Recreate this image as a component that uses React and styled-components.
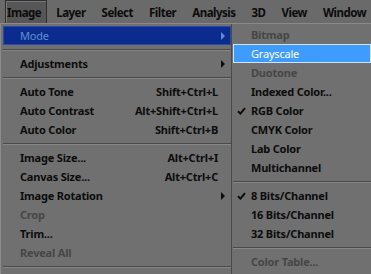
import React from "react";
import styled, { createGlobalStyle } from "styled-components";

const GlobalStyle = createGlobalStyle`
  html, body {
    margin: 0;
    padding: 0;
    background: #707070;
    overflow: hidden;
  }
  body {
    font-family: "Noto Sans", "Open Sans", sans-serif;
    font-weight: 700;
    font-size: 11px;
    letter-spacing: -0.2px;
    color: #0c0c0c;
  }
`;

const Wrapper = styled.div`
  width: 371px;
  height: 274px;
  display: flex;
  flex-direction: column;
  background: #707070;
  overflow: hidden;
`;

const MenuBar = styled.div`
  height: 23px;
  display: flex;
  align-items: stretch;
  padding-left: 5px;
  background: #6a6a6a;
  border-bottom: 1px solid #8a8a8a;
  box-sizing: content-box;
  white-space: nowrap;
`;

const BarItem = styled.div`
  display: flex;
  align-items: center;
  padding: ${(p) => (p.$active ? "0 5px 0 1px" : "0 7px")};
  margin-right: ${(p) => (p.$active ? "1px" : "0")};
  font-size: 11.5px;
  letter-spacing: -0.5px;
  background: ${(p) => (p.$active ? "#565656" : "transparent")};
  border: 1px solid ${(p) => (p.$active ? "#2e2e2e" : "transparent")};
  border-bottom: none;
  box-shadow: ${(p) => (p.$active ? "inset 1px 1px 0 #777777" : "none")};
`;

const Menus = styled.div`
  flex: 1;
  display: flex;
`;

const MainMenu = styled.div`
  width: 228px;
  padding: 2px 0 0 2px;
  border-left: 1px solid #8c8c8c;
  display: flex;
  flex-direction: column;
`;

const SubMenu = styled.div`
  flex: 1;
  padding: 1px 0 0 1px;
  border-left: 1px solid #4a4a4a;
  display: flex;
  flex-direction: column;
`;

const Row = styled.div`
  height: 19px;
  box-sizing: border-box;
  display: flex;
  align-items: center;
  padding-left: ${(p) => p.$indent}px;
  padding-right: 4px;
  color: ${(p) =>
    p.$variant === "dark"
      ? "#5f8fd0"
      : p.$variant === "light"
      ? "#ffffff"
      : p.$disabled
      ? "#464646"
      : "#0c0c0c"};
  background: ${(p) =>
    p.$variant === "dark"
      ? "#0b2c8e"
      : p.$variant === "light"
      ? "#3f9cff"
      : "transparent"};
  border: 1px solid
    ${(p) =>
      p.$variant === "dark"
        ? "#2a4aa8"
        : p.$variant === "light"
        ? "#cfe2ff"
        : "transparent"};
  position: relative;
  white-space: nowrap;
`;

const Check = styled.svg`
  position: absolute;
  left: 3px;
  top: 5px;
`;

const Label = styled.span`
  flex: 1;
  font-weight: ${(p) => (p.$light ? 400 : 700)};
`;

const Shortcut = styled.span`
  margin-right: 8px;
`;

const Arrow = styled.span`
  width: 0;
  height: 0;
  border-top: 4px solid transparent;
  border-bottom: 4px solid transparent;
  border-left: 4px solid ${(p) => (p.$dim ? "#5f8fd0" : "#0c0c0c")};
  margin-right: 1px;
`;

const Separator = styled.div`
  height: 9px;
  display: flex;
  flex-direction: column;
  justify-content: center;
  &::before {
    content: "";
    display: block;
    height: 1px;
    background: #4a4a4a;
  }
  &::after {
    content: "";
    display: block;
    height: 1px;
    background: #878787;
  }
`;

const barItems = ["Image", "Layer", "Select", "Filter", "Analysis", "3D", "View", "Window"];

const mainItems = [
  { label: "Mode", arrow: true, variant: "dark" },
  "sep",
  { label: "Adjustments", arrow: true },
  "sep",
  { label: "Auto Tone", shortcut: "Shift+Ctrl+L" },
  { label: "Auto Contrast", shortcut: "Alt+Shift+Ctrl+L" },
  { label: "Auto Color", shortcut: "Shift+Ctrl+B" },
  "sep",
  { label: "Image Size...", shortcut: "Alt+Ctrl+I" },
  { label: "Canvas Size...", shortcut: "Alt+Ctrl+C" },
  { label: "Image Rotation", arrow: true },
  { label: "Crop", disabled: true },
  { label: "Trim..." },
  { label: "Reveal All", disabled: true },
  "sep",
];

const subItems = [
  { label: "Bitmap", disabled: true },
  { label: "Grayscale", variant: "light" },
  { label: "Duotone", disabled: true },
  { label: "Indexed Color..." },
  { label: "RGB Color", checked: true },
  { label: "CMYK Color" },
  { label: "Lab Color" },
  { label: "Multichannel" },
  "sep",
  { label: "8 Bits/Channel", checked: true },
  { label: "16 Bits/Channel" },
  { label: "32 Bits/Channel" },
  "sep",
  { label: "Color Table...", disabled: true },
];

const renderItems = (items, indent) =>
  items.map((item, i) =>
    item === "sep" ? (
      <Separator key={i} />
    ) : (
      <Row key={i} $indent={indent} $variant={item.variant} $disabled={item.disabled}>
        {item.checked && (
          <Check width="9" height="8" viewBox="0 0 9 8">
            <path d="M1 4.2 L3.4 6.6 L8 1.2" fill="none" stroke="#0c0c0c" strokeWidth="2" />
          </Check>
        )}
        <Label $light={item.variant === "light" || item.variant === "dark"}>{item.label}</Label>
        {item.shortcut && <Shortcut>{item.shortcut}</Shortcut>}
        {item.arrow && <Arrow $dim={item.variant === "dark"} />}
      </Row>
    )
  );

const App = () => {
  return (
    <Wrapper>
      <GlobalStyle />
      <MenuBar>
        {barItems.map((name, i) => (
          <BarItem key={name} $active={i === 0}>
            {name}
          </BarItem>
        ))}
      </MenuBar>
      <Menus>
        <MainMenu>{renderItems(mainItems, 16)}</MainMenu>
        <SubMenu>{renderItems(subItems, 17)}</SubMenu>
      </Menus>
    </Wrapper>
  );
};

export default App;
